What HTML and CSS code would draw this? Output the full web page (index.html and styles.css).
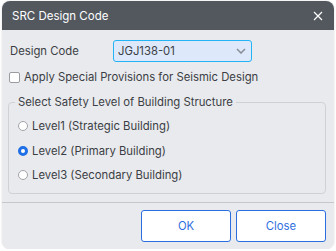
FILE: index.html
```html
<!DOCTYPE html>
<html>
<head>
<meta charset="utf-8">
<link rel="stylesheet" href="styles.css">
</head>
<body>
<div class="dialog">
  <div class="titlebar">
    <span class="title">SRC Design Code</span>
    <svg class="close-x" width="10" height="10" viewBox="0 0 10 10"><path d="M1 1L9 9M9 1L1 9" stroke="#ffffff" stroke-width="1.2" fill="none"/></svg>
  </div>
  <div class="body">
    <div class="row">
      <span class="label">Design Code</span>
      <div class="select">
        <span>JGJ138-01</span>
        <svg class="chev" width="10" height="6" viewBox="0 0 10 6"><path d="M1 1L5 5L9 1" stroke="#8a9099" stroke-width="1.6" fill="none"/></svg>
      </div>
    </div>
    <label class="check">
      <span class="box"></span>
      <span>Apply Special Provisions for Seismic Design</span>
    </label>
    <fieldset class="group">
      <legend>Select Safety Level of Building Structure</legend>
      <div class="radio"><span class="dot"></span><span>Level1 (Strategic Building)</span></div>
      <div class="radio"><span class="dot on"></span><span>Level2 (Primary Building)</span></div>
      <div class="radio"><span class="dot"></span><span>Level3 (Secondary Building)</span></div>
    </fieldset>
  </div>
  <div class="footer">
    <button class="btn">OK</button>
    <button class="btn">Close</button>
  </div>
</div>
</body>
</html>
```
FILE: styles.css
```css
html, body {
  margin: 0;
  padding: 0;
  background: #ffffff;
  font-family: "Inter", "Liberation Sans", sans-serif;
  font-size: 11.3px;
  color: #3b3e44;
}
.dialog {
  margin: 1px 2px 0 2px;
  width: 332px;
  height: 248px;
  background: #e9eaee;
  border-radius: 8px;
  overflow: hidden;
  display: flex;
  flex-direction: column;
  box-shadow: 0 0 2px rgba(0,0,0,0.15);
}
.titlebar {
  height: 29px;
  background: #53585f;
  display: flex;
  align-items: center;
  justify-content: space-between;
  padding: 0 11px 0 10px;
  flex: 0 0 auto;
}
.title {
  color: #ffffff;
  font-size: 11.5px;
}
.body {
  padding: 10px 8px 0 6px;
  flex: 1 1 auto;
}
.row {
  display: flex;
  align-items: center;
  height: 22px;
}
.label {
  flex: 0 0 105px;
  padding-left: 2px;
  box-sizing: border-box;
}
.select {
  flex: 0 0 139px;
  height: 22px;
  border: 1px solid #22b4f4;
  border-radius: 3px;
  background: #dde8fb;
  display: flex;
  align-items: center;
  justify-content: space-between;
  padding: 0 5px 0 4px;
  box-sizing: border-box;
}
.check {
  display: flex;
  align-items: center;
  gap: 4px;
  margin: 9px 0 0 1px;
  height: 12px;
}
.box {
  width: 11px;
  height: 11px;
  border: 1px solid #9a9ca1;
  border-radius: 2px;
  background: #ffffff;
  box-sizing: border-box;
}
.group {
  margin: 12px 0 0 0;
  border: 1px solid #cfd1d5;
  border-radius: 4px;
  padding: 5px 0 5px 9px;
  min-width: 0;
}
.group legend {
  padding: 0 3px;
  margin-left: -3px;
  line-height: 14px;
}
.radio {
  display: flex;
  align-items: center;
  gap: 4px;
  height: 24.5px;
}
.dot {
  width: 10px;
  height: 10px;
  border: 1px solid #a2a4a8;
  border-radius: 50%;
  background: #ffffff;
  box-sizing: border-box;
}
.dot.on {
  border: 3px solid #1f6fe5;
}
.footer {
  border-top: 1px solid #c6c7ca;
  height: 47px;
  flex: 0 0 47px;
  display: flex;
  justify-content: flex-end;
  align-items: flex-start;
  gap: 5px;
  padding: 7px 8px 0 0;
  box-sizing: border-box;
}
.btn {
  width: 90px;
  height: 32px;
  background: #ffffff;
  border: 1px solid #2a6fe0;
  border-radius: 3px;
  color: #2f6fe0;
  font-family: inherit;
  font-size: 11.3px;
}
```
